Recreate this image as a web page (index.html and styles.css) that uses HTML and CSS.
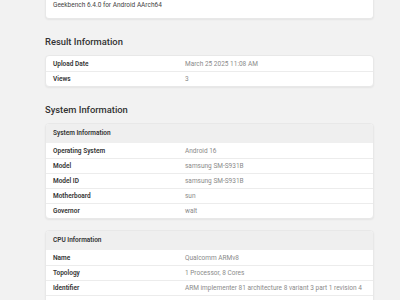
FILE: index.html
```html
<!DOCTYPE html>
<html lang="en">
<head>
    <meta charset="UTF-8">
    <meta name="viewport" content="width=device-width, initial-scale=1.0">
    <title>Geekbench Result</title>
    <link rel="stylesheet" href="styles.css">
</head>
<body>
    <div class="page">
        <!-- tail of the benchmark header card, scrolled above the viewport -->
        <div class="card card-top">
            <div class="version">Geekbench 6.4.0 for Android AArch64</div>
        </div>

        <h2>Result Information</h2>
        <div class="card">
            <div class="row"><span class="label">Upload Date</span><span class="value">March 25 2025 11:08 AM</span></div>
            <div class="row"><span class="label">Views</span><span class="value">3</span></div>
        </div>

        <h2>System Information</h2>
        <div class="card">
            <div class="card-head">System Information</div>
            <div class="row"><span class="label">Operating System</span><span class="value">Android 16</span></div>
            <div class="row"><span class="label">Model</span><span class="value">samsung SM-S931B</span></div>
            <div class="row"><span class="label">Model ID</span><span class="value">samsung SM-S931B</span></div>
            <div class="row"><span class="label">Motherboard</span><span class="value">sun</span></div>
            <div class="row"><span class="label">Governor</span><span class="value">walt</span></div>
        </div>

        <div class="card card-gap">
            <div class="card-head">CPU Information</div>
            <div class="row"><span class="label">Name</span><span class="value">Qualcomm ARMv8</span></div>
            <div class="row"><span class="label">Topology</span><span class="value">1 Processor, 8 Cores</span></div>
            <div class="row"><span class="label">Identifier</span><span class="value">ARM implementer 81 architecture 8 variant 3 part 1 revision 4</span></div>
            <div class="row row-tall"></div>
        </div>
    </div>
</body>
</html>
```

FILE: styles.css
```css
/* Result page, small print */
body {
    margin: 0;
    background-color: #f2f2f2;
    font-family: Roboto, "Liberation Sans", sans-serif;
    font-size: 6.5px;
    color: #333;
    overflow: hidden;
}
.page {
    width: 329px;
    margin-left: 45px;
}
h2 {
    font-size: 9.4px;
    font-weight: 500;
    color: #333;
    line-height: 12px;
    margin: 17px 0 7px;
}
.card {
    background-color: #fff;
    border: 1px solid #e8e8e8;
    border-radius: 4px;
    box-shadow: 0 1px 2px rgba(0,0,0,0.06);
    overflow: hidden;
}
.card-top {
    margin-top: -10px;
    border-top: none;
    border-radius: 0 0 4px 4px;
}
.card-gap {
    margin-top: 11px;
}
.version {
    padding: 9px 7px 6px;
    line-height: 13px;
    color: #444;
}
.card-head {
    background-color: #efefef;
    height: 19px;
    line-height: 19px;
    padding: 0 7px;
    font-weight: 600;
    color: #333;
}
.row {
    display: flex;
    height: 15px;
    align-items: center;
    padding: 0 7px;
    border-top: 1px solid #ececec;
    box-sizing: border-box;
}
.row-tall {
    height: 20px;
}
.card-head + .row,
.card > .row:first-child {
    border-top: none;
}
.label {
    width: 132px;
    flex-shrink: 0;
    font-weight: 600;
    color: #333;
}
.value {
    color: #8a8a8a;
}
```
